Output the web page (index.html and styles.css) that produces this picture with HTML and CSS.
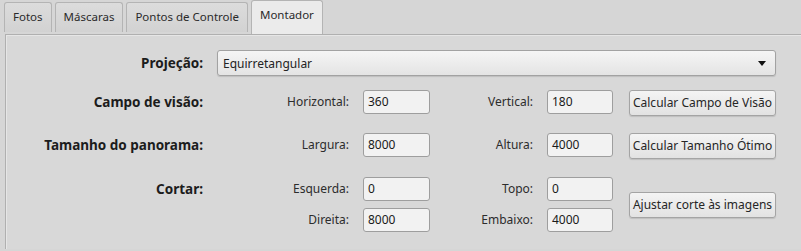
FILE: index.html
```html
<!DOCTYPE html>
<html lang="pt-BR">
<head>
  <meta charset="UTF-8">
  <title>Montador</title>
  <link rel="stylesheet" href="styles.css">
</head>
<body>

  <div class="tabs">
    <div class="tab">Fotos</div>
    <div class="tab">Máscaras</div>
    <div class="tab">Pontos de Controle</div>
    <div class="tab active">Montador</div>
  </div>

  <div class="painel">
    <div class="linha">
      <div class="rotulo">Projeção:</div>
      <div class="combo">
        <span>Equirretangular</span>
        <span class="seta"></span>
      </div>
    </div>

    <div class="linha espaco-1">
      <div class="rotulo">Campo de visão:</div>
      <div class="sub">Horizontal:</div>
      <div class="campo">360</div>
      <div class="sub">Vertical:</div>
      <div class="campo">180</div>
      <div class="botao">Calcular Campo de Visão</div>
    </div>

    <div class="linha espaco-2">
      <div class="rotulo">Tamanho do panorama:</div>
      <div class="sub">Largura:</div>
      <div class="campo">8000</div>
      <div class="sub">Altura:</div>
      <div class="campo">4000</div>
      <div class="botao">Calcular Tamanho Ótimo</div>
    </div>

    <div class="linha cortar espaco-3">
      <div class="rotulo">Cortar:</div>
      <div class="sub">Esquerda:</div>
      <div class="campo">0</div>
      <div class="sub">Topo:</div>
      <div class="campo">0</div>
      <div class="botao duplo">Ajustar corte às imagens</div>
      <div class="sub col2">Direita:</div>
      <div class="campo">8000</div>
      <div class="sub">Embaixo:</div>
      <div class="campo">4000</div>
    </div>
  </div>

</body>
</html>
```

FILE: styles.css
```css
body {
  font-family: "Noto Sans", "Open Sans", sans-serif;
  font-size: 12px;
  color: #242424;
  margin: 0;
  padding: 0;
  background-color: #d6d6d6;
  overflow: hidden;
}

.tabs {
  display: flex;
  align-items: flex-end;
  gap: 3px;
  padding: 3px 0 0 4px;
  height: 32px;
  box-sizing: border-box;
}

.tab {
  height: 30px;
  line-height: 28px;
  padding: 0 8px;
  box-sizing: border-box;
  border: 1px solid #b4b4b4;
  border-bottom: none;
  border-radius: 3px 3px 0 0;
  background: linear-gradient(#dcdcdc, #d2d2d2);
  color: #2a2a2a;
  font-size: 11.5px;
}

.tab.active {
  height: 34px;
  line-height: 28px;
  padding: 0 8px;
  margin-bottom: -2px;
  background: #ebebeb;
  position: relative;
  z-index: 1;
}

.painel {
  margin-left: 5px;
  margin-top: 2px;
  border-top: 1px solid #b0b0b0;
  border-left: 1px solid #b0b0b0;
  box-shadow: inset 1px 1px 0 #e6e6e6;
  background: #d8d8d8;
  padding-top: 15px;
  height: 215px;
  box-sizing: border-box;
}

.linha {
  display: grid;
  grid-template-columns: 197px 132px 67px 89px 66px 149px;
  column-gap: 14px;
  align-items: start;
}

.espaco-1 {
  margin-top: 14px;
}

.espaco-2 {
  margin-top: 17px;
}

.espaco-3 {
  margin-top: 18px;
}

.cortar {
  grid-template-rows: 24px 24px;
  row-gap: 7px;
}

.rotulo {
  font-weight: bold;
  font-size: 13.5px;
  text-align: right;
  line-height: 24px;
  color: #1c1c1c;
}

.linha:first-child .rotulo {
  line-height: 26px;
}

.sub {
  text-align: right;
  line-height: 24px;
  color: #2c2c2c;
}

.col2 {
  grid-column: 2;
}

.combo {
  grid-column: 2 / 7;
  height: 26px;
  box-sizing: border-box;
  border: 1px solid #a2a2a2;
  border-radius: 3px;
  background: linear-gradient(#f5f5f5, #e4e4e4);
  box-shadow: 0 1px 1px rgba(0, 0, 0, 0.12);
  display: flex;
  align-items: center;
  justify-content: space-between;
  padding: 0 9px 0 5px;
}

.seta {
  width: 0;
  height: 0;
  border-left: 4px solid transparent;
  border-right: 4px solid transparent;
  border-top: 5px solid #111;
}

.campo {
  height: 24px;
  line-height: 22px;
  box-sizing: border-box;
  border: 1px solid #9e9e9e;
  border-radius: 3px;
  background: #f2f2f2;
  padding-left: 4px;
  color: #1a1a1a;
}

.botao {
  justify-self: end;
  width: 147px;
  height: 26px;
  line-height: 24px;
  box-sizing: border-box;
  border: 1px solid #a4a4a4;
  border-radius: 3px;
  background: linear-gradient(#f4f4f4, #e2e2e2);
  box-shadow: 0 1px 1px rgba(0, 0, 0, 0.12);
  text-align: center;
  white-space: nowrap;
  color: #262626;
}

.duplo {
  grid-column: 6;
  grid-row: 1 / 3;
  align-self: center;
}
```
